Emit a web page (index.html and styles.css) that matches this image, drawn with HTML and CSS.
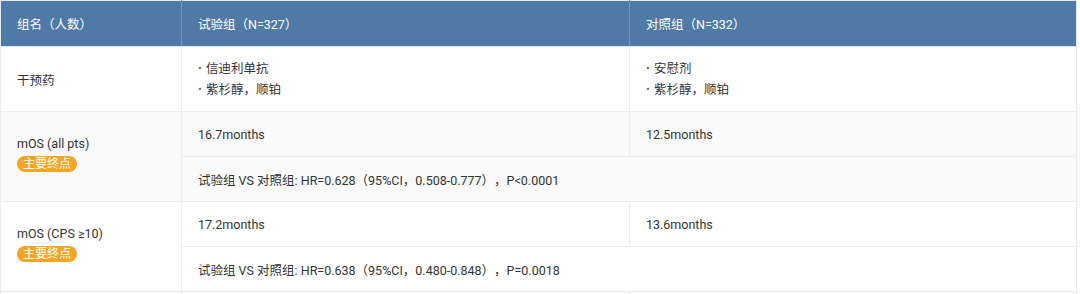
FILE: index.html
```html
<!DOCTYPE html>
<html lang="zh-CN">
<head>
<meta charset="utf-8">
<title>试验结果</title>
<link rel="stylesheet" href="styles.css">
</head>
<body>
<table class="trial">
  <colgroup>
    <col class="c1">
    <col class="c2">
    <col class="c3">
  </colgroup>
  <thead>
    <tr>
      <th>组名（人数）</th>
      <th>试验组（N=327）</th>
      <th>对照组（N=332）</th>
    </tr>
  </thead>
  <tbody>
    <tr class="drug">
      <td>干预药</td>
      <td>
        <ul class="bullets">
          <li>信迪利单抗</li>
          <li>紫杉醇，顺铂</li>
        </ul>
      </td>
      <td>
        <ul class="bullets">
          <li>安慰剂</li>
          <li>紫杉醇，顺铂</li>
        </ul>
      </td>
    </tr>
    <tr class="sub gray">
      <td rowspan="2" class="label">
        <div class="label-box">
          <span>mOS (all pts)</span>
          <span class="badge">主要终点</span>
        </div>
      </td>
      <td>16.7months</td>
      <td>12.5months</td>
    </tr>
    <tr class="sub gray">
      <td colspan="2">试验组 VS 对照组: HR=0.628（95%CI，0.508-0.777），P&lt;0.0001</td>
    </tr>
    <tr class="sub">
      <td rowspan="2" class="label">
        <div class="label-box">
          <span>mOS (CPS ≥10)</span>
          <span class="badge">主要终点</span>
        </div>
      </td>
      <td>17.2months</td>
      <td>13.6months</td>
    </tr>
    <tr class="sub">
      <td colspan="2">试验组 VS 对照组: HR=0.638（95%CI，0.480-0.848），P=0.0018</td>
    </tr>
    <tr class="sub gray">
      <td></td>
      <td></td>
      <td></td>
    </tr>
  </tbody>
</table>
</body>
</html>
```

FILE: styles.css
```css
html, body {
  margin: 0;
  padding: 0;
  background: #ffffff;
  overflow: hidden;
}

.trial {
  border-collapse: collapse;
  table-layout: fixed;
  width: 1076px;
  font-family: Roboto, "Noto Sans CJK SC", sans-serif;
  font-size: 12.5px;
  color: #333333;
  border: 1px solid #e6e9ee;
  text-spacing-trim: space-all;
}

.c1 { width: 181px; }
.c2 { width: 448px; }
.c3 { width: 447px; }

.trial th {
  background: #4f79a6;
  color: #ffffff;
  font-weight: normal;
  text-align: left;
  padding: 0 16px;
  height: 45px;
  border-left: 1px solid #7394b9;
  border-bottom: 1px solid #dde4ee;
}

.trial th:first-child {
  border-left: none;
}

.trial td {
  border: 1px solid #ededed;
  padding: 0 16px;
  vertical-align: middle;
}

.drug td {
  height: 64px;
}

.sub td {
  height: 44px;
}

.gray td {
  background: #fafafa;
}

.bullets {
  list-style: none;
  margin: 0;
  padding: 0;
  line-height: 21px;
}

.bullets li::before {
  content: "•";
  color: #666666;
  font-size: 11px;
  display: inline-block;
  width: 8px;
  vertical-align: 1px;
}

.label-box {
  display: flex;
  flex-direction: column;
  align-items: flex-start;
  gap: 5px;
  margin-bottom: 5px;
}

.badge {
  background: #f5a524;
  color: #ffffff;
  font-size: 12px;
  line-height: 16px;
  padding: 0 6px;
  border-radius: 8px;
}
```
